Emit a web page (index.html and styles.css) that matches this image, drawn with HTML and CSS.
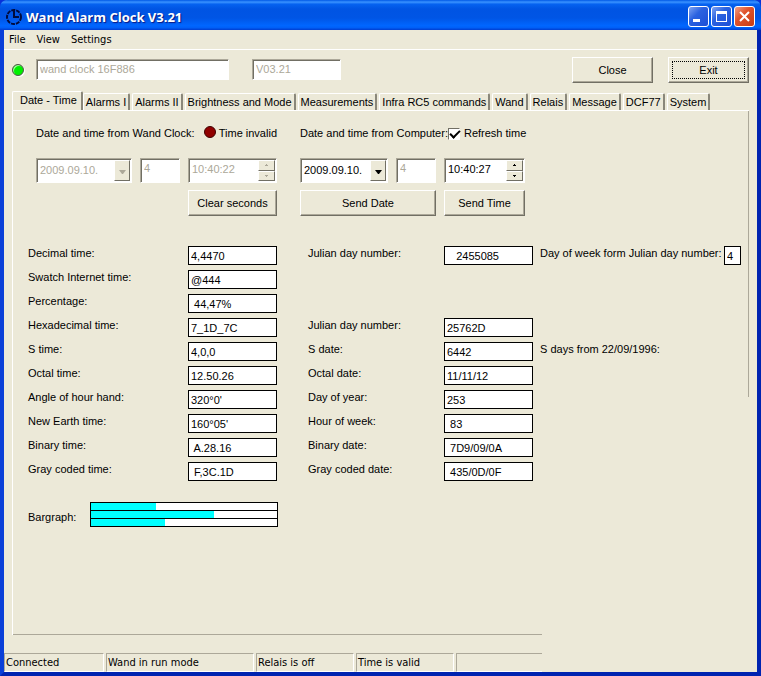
FILE: index.html
```html
<!DOCTYPE html>
<html lang="en">
<head>
  <meta charset="UTF-8">
  <meta name="viewport" content="width=device-width, initial-scale=1.0">
  <title>Wand Alarm Clock V3.21</title>
  <link rel="stylesheet" href="styles.css">
</head>
<body>
  <div class="window">
    <header class="titlebar">
      <svg class="app-icon" width="18" height="18" viewBox="0 0 18 18" fill="none" stroke="#000b3c">
        <circle cx="9" cy="9" r="7" stroke-width="2" stroke-dasharray="4 1"/>
        <path d="M9 3v6h5" stroke-width="2"/>
      </svg>
      <h1>Wand Alarm Clock V3.21</h1>
      <div class="window-buttons">
        <button class="win-btn" aria-label="Minimize">
          <svg width="19" height="19" viewBox="0 0 19 19"><path d="M4 12h7v3H4z" fill="#fff"/></svg>
        </button>
        <button class="win-btn" aria-label="Maximize">
          <svg width="19" height="19" viewBox="0 0 19 19"><path d="M4 4h11v11H4zM5 7v7h9V7z" fill="#fff" fill-rule="evenodd"/></svg>
        </button>
        <button class="win-btn win-close" aria-label="Close window">
          <svg width="19" height="19" viewBox="0 0 19 19"><path d="M5 5l9 9M14 5l-9 9" stroke="#fff" stroke-width="2"/></svg>
        </button>
      </div>
    </header>

    <nav class="menu">
      <a href="#">File</a>
      <a href="#">View</a>
      <a href="#">Settings</a>
    </nav>

    <div class="toolbar">
      <span class="led led-green"></span>
      <input class="sunken device" type="text" value="wand clock 16F886" aria-label="Device" disabled>
      <input class="sunken firmware" type="text" value="V03.21" aria-label="Firmware version" disabled>
      <div class="toolbar-buttons">
        <button class="btn">Close</button>
        <button class="btn default">Exit</button>
      </div>
    </div>

    <div class="tabs" role="tablist">
      <button class="tab active" role="tab" aria-selected="true">Date - Time</button>
      <button class="tab" role="tab">Alarms I</button>
      <button class="tab" role="tab">Alarms II</button>
      <button class="tab" role="tab">Brightness and Mode</button>
      <button class="tab" role="tab">Measurements</button>
      <button class="tab" role="tab">Infra RC5 commands</button>
      <button class="tab" role="tab">Wand</button>
      <button class="tab" role="tab">Relais</button>
      <button class="tab" role="tab">Message</button>
      <button class="tab" role="tab">DCF77</button>
      <button class="tab" role="tab">System</button>
    </div>

    <main class="panel">
      <div class="sources">
        <section class="source">
          <div class="source-head">
            <span>Date and time from Wand Clock:</span>
            <span class="validity"><span class="led led-red"></span>Time invalid</span>
          </div>
          <div class="combo">
            <select aria-label="Wand clock date" disabled><option>2009.09.10.</option></select>
            <span class="combo-arrow"><svg width="7" height="4"><path d="M0 0h7L4 4H3z" fill="#aca899"/></svg></span>
          </div>
          <input class="sunken" type="text" value="4" aria-label="Wand clock day of week" disabled>
          <div class="spin">
            <input type="text" value="10:40:22" aria-label="Wand clock time" disabled>
            <span class="spin-buttons">
              <button aria-label="Up" disabled><svg width="3" height="2"><path d="M1 0h1v1h1v1H0V1h1z" fill="#aca899"/></svg></button>
              <button aria-label="Down" disabled><svg width="3" height="2"><path d="M0 0h3v1H2v1H1V1H0z" fill="#aca899"/></svg></button>
            </span>
          </div>
          <button class="btn clear">Clear seconds</button>
        </section>

        <section class="source source-pc">
          <div class="source-head">
            <span>Date and time from Computer:</span>
            <label class="check"><input type="checkbox" checked>Refresh time</label>
          </div>
          <div class="combo">
            <select aria-label="Computer date"><option>2009.09.10.</option></select>
            <span class="combo-arrow"><svg width="7" height="4"><path d="M0 0h7L4 4H3z" fill="#000"/></svg></span>
          </div>
          <input class="sunken" type="text" value="4" aria-label="Computer day of week" disabled>
          <div class="spin">
            <input type="text" value="10:40:27" aria-label="Computer time">
            <span class="spin-buttons">
              <button aria-label="Up"><svg width="3" height="2"><path d="M1 0h1v1h1v1H0V1h1z" fill="#000"/></svg></button>
              <button aria-label="Down"><svg width="3" height="2"><path d="M0 0h3v1H2v1H1V1H0z" fill="#000"/></svg></button>
            </span>
          </div>
          <button class="btn send-date">Send Date</button>
          <button class="btn">Send Time</button>
        </section>
      </div>

      <div class="values">
        <label for="decimal">Decimal time:</label><input id="decimal" type="text" value="4,4470" readonly>
        <label class="second" for="julian">Julian day number:</label><input id="julian" type="text" value="   2455085" readonly>
        <label class="third" for="weekday">Day of week form Julian day number:</label><input id="weekday" type="text" value="4" readonly>

        <label for="swatch">Swatch Internet time:</label><input id="swatch" type="text" value="@444" readonly>

        <label for="percent">Percentage:</label><input id="percent" type="text" value=" 44,47%" readonly>

        <label for="hex">Hexadecimal time:</label><input id="hex" type="text" value="7_1D_7C" readonly>
        <label class="second" for="julian-hex">Julian day number:</label><input id="julian-hex" type="text" value="25762D" readonly>

        <label for="stime">S time:</label><input id="stime" type="text" value="4,0,0" readonly>
        <label class="second" for="sdate">S date:</label><input id="sdate" type="text" value="6442" readonly>
        <span class="third">S days from 22/09/1996:</span>

        <label for="octal">Octal time:</label><input id="octal" type="text" value="12.50.26" readonly>
        <label class="second" for="octal-date">Octal date:</label><input id="octal-date" type="text" value="11/11/12" readonly>

        <label for="angle">Angle of hour hand:</label><input id="angle" type="text" value="320°0'" readonly>
        <label class="second" for="yearday">Day of year:</label><input id="yearday" type="text" value="253" readonly>

        <label for="earth">New Earth time:</label><input id="earth" type="text" value="160°05'" readonly>
        <label class="second" for="weekhour">Hour of week:</label><input id="weekhour" type="text" value=" 83" readonly>

        <label for="binary">Binary time:</label><input id="binary" type="text" value=" A.28.16" readonly>
        <label class="second" for="binary-date">Binary date:</label><input id="binary-date" type="text" value=" 7D9/09/0A" readonly>

        <label for="gray">Gray coded time:</label><input id="gray" type="text" value=" F,3C.1D" readonly>
        <label class="second" for="gray-date">Gray coded date:</label><input id="gray-date" type="text" value=" 435/0D/0F" readonly>
      </div>

      <div class="bargraph">
        <span>Bargraph:</span>
        <div class="bars">
          <div class="bar"><div class="fill" style="width: 35%"></div></div>
          <div class="bar"><div class="fill" style="width: 66%"></div></div>
          <div class="bar"><div class="fill" style="width: 40%"></div></div>
        </div>
      </div>
    </main>

    <footer class="statusbar">
      <span class="cell">Connected</span>
      <span class="cell wide">Wand in run mode</span>
      <span class="cell">Relais is off</span>
      <span class="cell">Time is valid</span>
      <span class="cell last"></span>
    </footer>
  </div>
</body>
</html>
```
FILE: styles.css
```css
* {
  box-sizing: border-box;
}
body {
  margin: 0;
  background-color: #0831d9;
  color: #000;
  font-family: "Liberation Sans", Arial, sans-serif;
  font-size: 11px;
  line-height: 16px;
}
button, input, select {
  margin: 0;
  font: inherit;
  color: inherit;
}
.window {
  display: flex;
  flex-direction: column;
  min-height: 100vh;
  background-color: #ece9d8;
  border: solid #0a3fd8;
  border-width: 0 4px 4px;
  border-right-color: #0023b0;
  border-bottom-color: #0023b0;
  border-radius: 7px 7px 0 0;
}

/* title bar */
.titlebar {
  display: flex;
  align-items: center;
  height: 30px;
  margin: 0 -4px;
  padding: 3px 6px 0 5px;
  border-radius: 7px 7px 0 0;
  background: linear-gradient(#0058e6 0%, #3a93ff 7%, #0562f0 14%, #0054e3 30%, #0055e5 60%, #0066ff 85%, #0060f8 92%, #003dd0 100%);
}
.titlebar h1 {
  flex: 1;
  margin: 0 0 0 3px;
  font-family: "Open Sans", "Trebuchet MS", sans-serif;
  font-size: 13px;
  line-height: 20px;
  font-weight: bold;
  color: #fff;
  text-shadow: 1px 1px 1px #0a1883;
}
.window-buttons {
  display: flex;
  gap: 2px;
}
.win-btn {
  width: 21px;
  height: 21px;
  padding: 0;
  border: 1px solid #fff;
  border-radius: 3px;
  background: linear-gradient(135deg, #7fa4f2, #2b62e0 40%, #1c4fd6);
}
.win-btn svg {
  display: block;
}
.win-close {
  background: linear-gradient(135deg, #f0a088, #e0532c 40%, #c83c14);
}

/* menu */
.menu {
  display: flex;
  gap: 11px;
  height: 20px;
  padding: 2px 5px;
  border-bottom: 1px solid #fff;
  font-family: "DejaVu Sans Condensed", Tahoma, sans-serif;
}
.menu a {
  color: #000;
  text-decoration: none;
}

/* toolbar */
.toolbar {
  display: flex;
  align-items: center;
  height: 41px;
  padding: 0 8px 2px;
}
.led {
  flex: none;
  width: 12px;
  height: 12px;
  border: 1px solid #55554c;
  border-radius: 50%;
}
.led-green {
  background-color: #00f000;
  box-shadow: inset 1px 1px 0 #a0ffa0, 1px 1px 0 #fff;
}
.led-red {
  margin-top: 1px;
  background-color: #900000;
  border-color: #400000;
}
.sunken, .combo, .spin {
  border: 1px solid;
  border-color: #aca899 #fff #fff #aca899;
  box-shadow: inset 1px 1px 0 #716f64;
  background-color: #fff;
}
.sunken {
  min-width: 0;
  padding: 0 3px 2px;
}
input:disabled, select:disabled {
  color: #aca899;
  opacity: 1;
}
.device {
  width: 193px;
  height: 21px;
  margin-left: 12px;
}
.firmware {
  width: 89px;
  height: 21px;
  margin-left: 23px;
}
.toolbar-buttons {
  display: flex;
  gap: 15px;
  margin-left: auto;
}
.btn {
  height: 26px;
  padding: 0;
  border: 1px solid;
  border-color: #fff #716f64 #716f64 #fff;
  box-shadow: inset -1px -1px 0 #aca899;
  background-color: #ece9d8;
}
.toolbar .btn {
  width: 81px;
}
.default {
  outline: 1px dotted #000;
  outline-offset: -5px;
}

/* tabs */
.tabs {
  display: flex;
  align-items: flex-end;
  gap: 2px;
  padding: 0 8px;
}
.tab {
  height: 17px;
  padding: 0 2px;
  border: solid;
  border-width: 1px 2px 0 1px;
  border-color: #fff #8a877a #fff #fff;
  border-radius: 2px 2px 0 0;
  background-color: #ece9d8;
  white-space: nowrap;
}
.tab.active {
  position: relative;
  height: 20px;
  margin: 0 -2px -1px 0;
  padding: 0 4px 3px 7px;
}

/* panel, its lower right frame stops short of the corner */
.panel {
  position: relative;
  flex: 1;
  margin: 0 8px 18px;
  padding: 14px 6px 0 15px;
  border: solid #fff;
  border-width: 1px 0 0 1px;
}
.panel::before {
  content: "";
  position: absolute;
  top: 0;
  right: 0;
  width: 1px;
  height: 286px;
  background-color: #aca899;
}
.panel::after {
  content: "";
  position: absolute;
  bottom: 0;
  left: 0;
  width: 529px;
  max-width: 100%;
  height: 1px;
  background-color: #aca899;
}
.sources {
  display: flex;
  gap: 23px;
  padding-left: 8px;
}
.source {
  display: grid;
  grid-template-columns: 96px 40px 89px;
  grid-template-rows: 26px 25px 26px;
  column-gap: 8px;
  row-gap: 7px;
}
.source-pc {
  grid-template-columns: 88px 40px 81px;
}
.source-head {
  grid-column: 1 / -1;
  display: flex;
  justify-content: space-between;
  white-space: nowrap;
}
.validity {
  display: flex;
  gap: 3px;
}
.check {
  display: flex;
  gap: 4px;
}
.check input {
  appearance: none;
  width: 12px;
  height: 12px;
  margin-top: 3px;
  border: 1px solid;
  border-color: #716f64 #fff #fff #716f64;
  background-color: #fff;
}
.check input:checked::before {
  content: "";
  display: block;
  width: 8px;
  height: 4px;
  margin: 1px;
  border: solid #000;
  border-width: 0 0 2px 2px;
  transform: rotate(-45deg);
}
.combo {
  position: relative;
}
.combo select {
  appearance: none;
  width: 100%;
  height: 21px;
  padding: 0 3px;
  border: 0;
  background: none;
}
.combo-arrow {
  position: absolute;
  top: 1px;
  right: 1px;
  bottom: 1px;
  display: flex;
  align-items: center;
  justify-content: center;
  width: 16px;
  padding-top: 2px;
  border: 1px solid;
  border-color: #fff #716f64 #716f64 #fff;
  background-color: #ece9d8;
  pointer-events: none;
}
.source .sunken {
  padding-bottom: 5px;
}
.spin {
  display: flex;
  padding: 1px;
}
.spin input {
  flex: 1;
  min-width: 0;
  height: 18px;
  padding: 0 2px;
  border: 0;
  background: none;
}
.spin-buttons {
  display: flex;
  flex-direction: column;
  width: 17px;
}
.spin-buttons button {
  flex: 1;
  display: flex;
  align-items: center;
  justify-content: center;
  padding: 0;
  border: 1px solid;
  border-color: #fff #716f64 #716f64 #fff;
  background-color: #ece9d8;
}
.clear {
  grid-column: 3;
}
.send-date {
  grid-column: 1 / 3;
}

/* converted values */
.values {
  display: grid;
  grid-template-columns: 160px 89px 31px 136px 89px 7px 184px 17px;
  grid-auto-rows: 19px;
  row-gap: 5px;
  margin-top: 30px;
}
.values label, .values span {
  grid-column: 1;
  line-height: 14px;
  white-space: nowrap;
}
.values .second {
  grid-column: 4;
}
.values .third {
  grid-column: 7;
}
.values input {
  min-width: 0;
  padding: 0 2px;
  border: 1px solid #000;
  background-color: #fff;
}
.bargraph {
  display: flex;
  align-items: center;
  margin-top: 21px;
}
.bargraph span {
  width: 62px;
  padding-top: 4px;
}
.bars {
  width: 188px;
  border: solid #000;
  border-width: 1px 1px 0;
  background-color: #fff;
}
.bar {
  height: 8px;
  border-bottom: 1px solid #000;
}
.fill {
  height: 100%;
  background-color: #00ffff;
}

/* status bar */
.statusbar {
  display: flex;
  gap: 2px;
  font-family: "DejaVu Sans Condensed", Tahoma, sans-serif;
}
.cell {
  width: 98px;
  height: 19px;
  padding: 1px;
  border: 1px solid;
  border-color: #aca899 #fff #fff #aca899;
}
.cell:first-child {
  width: 100px;
}
.cell.wide {
  width: 148px;
}
.cell.last {
  width: 86px;
  border-right: 0;
}
```
